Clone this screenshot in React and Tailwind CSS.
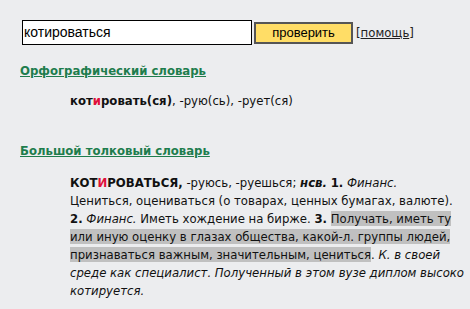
export default function App() {
  const body = { fontFamily: '"DejaVu Sans Condensed", "DejaVu Sans", Tahoma, sans-serif' };
  return (
    <div className="w-[470px] h-[309px] bg-[#ecedef] text-[#111] overflow-hidden" style={body}>
      <div className="pt-[20px] pl-[22px] flex items-center">
        <div className="w-[230px] h-[25px] border border-black bg-white flex items-center pl-[1px] text-[14px] text-black" style={{ fontFamily: '"Liberation Sans", Arial, sans-serif' }}>
          котироваться
        </div>
        <div className="ml-[2px] w-[99px] h-[22px] border-2 border-[#555] bg-[#ffdd66] flex items-center justify-center text-[13px] text-black" style={{ fontFamily: '"Liberation Sans", Arial, sans-serif' }}>
          проверить
        </div>
        <div className="ml-[3px] text-[13px] text-[#222]">
          [<span className="underline">помощь</span>]
        </div>
      </div>
      <div className="pl-[20px] mt-[17px] text-[13px] font-bold text-[#1e7d4d] underline leading-[18px]">
        Орфографический словарь
      </div>
      <div className="pl-[70px] mt-[12px] text-[13px] leading-[18px]">
        <b>кот<span className="text-[#e0103a]">и</span>ровать(ся)</b>, -рую(сь), -рует(ся)
      </div>
      <div className="pl-[20px] mt-[32px] text-[13px] font-bold text-[#1e7d4d] underline leading-[18px]">
        Большой толковый словарь
      </div>
      <div className="pl-[70px] mt-[14px] text-[13px] leading-[18px] whitespace-nowrap">
        <b>КОТ<span className="text-[#e0103a]">И</span>РОВАТЬСЯ,</b> -руюсь, -руешься; <b><i>нсв.</i></b> <b>1.</b> <i>Финанс.</i>
        <br />
        Цениться, оцениваться (о товарах, ценных бумагах, валюте).
        <br />
        <b>2.</b> <i>Финанс.</i> Иметь хождение на бирже. <b>3.</b> <span className="bg-[#c0c0c0]">Получать, иметь ту
        <br />
        или иную оценку в глазах общества, какой-л. группы людей,
        <br />
        признаваться важным, значительным, цениться</span>. <i>К. в своей</i>
        <br />
        <i>среде как специалист. Полученный в этом вузе диплом высоко</i>
        <br />
        <i>котируется.</i>
      </div>
    </div>
  );
}
